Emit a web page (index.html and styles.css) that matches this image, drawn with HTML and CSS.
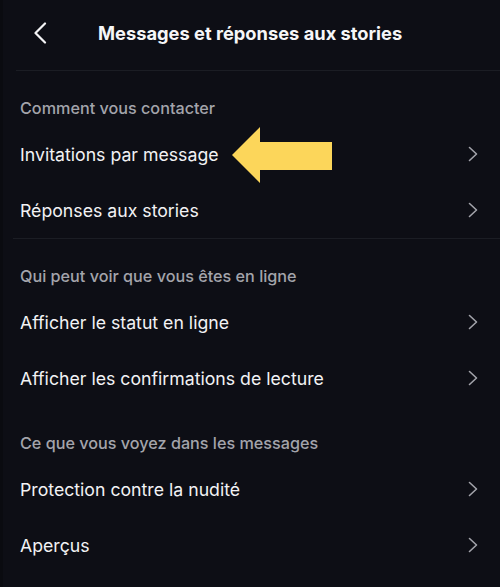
FILE: index.html
```html
<!DOCTYPE html>
<html lang="fr">
<head>
<meta charset="utf-8">
<title>Messages et réponses aux stories</title>
<link rel="stylesheet" href="styles.css">
</head>
<body>
<div class="screen">
  <header class="topbar">
    <svg class="back" width="14" height="22" viewBox="0 0 14 22"><polyline points="12,1.5 2.5,11 12,20.5" fill="none" stroke="#f4f4f6" stroke-width="2.2" stroke-linecap="round" stroke-linejoin="round"/></svg>
    <h1 class="title">Messages et réponses aux stories</h1>
  </header>

  <section class="section bordered">
    <div class="section-title">Comment vous contacter</div>
    <div class="row">
      <span class="label">Invitations par message</span>
      <svg class="arrow" width="100" height="56" viewBox="0 0 100 56"><polygon points="0,28 28,0 28,15 100,15 100,43 28,43 28,56" fill="#fcd65a"/></svg>
      <svg class="chev" width="10" height="16" viewBox="0 0 10 16"><polyline points="1.5,1.5 8.5,8 1.5,14.5" fill="none" stroke="#a2a3aa" stroke-width="1.6" stroke-linecap="round" stroke-linejoin="round"/></svg>
    </div>
    <div class="row">
      <span class="label">Réponses aux stories</span>
      <svg class="chev" width="10" height="16" viewBox="0 0 10 16"><polyline points="1.5,1.5 8.5,8 1.5,14.5" fill="none" stroke="#a2a3aa" stroke-width="1.6" stroke-linecap="round" stroke-linejoin="round"/></svg>
    </div>
  </section>

  <section class="section">
    <div class="section-title">Qui peut voir que vous êtes en ligne</div>
    <div class="row">
      <span class="label">Afficher le statut en ligne</span>
      <svg class="chev" width="10" height="16" viewBox="0 0 10 16"><polyline points="1.5,1.5 8.5,8 1.5,14.5" fill="none" stroke="#a2a3aa" stroke-width="1.6" stroke-linecap="round" stroke-linejoin="round"/></svg>
    </div>
    <div class="row">
      <span class="label">Afficher les confirmations de lecture</span>
      <svg class="chev" width="10" height="16" viewBox="0 0 10 16"><polyline points="1.5,1.5 8.5,8 1.5,14.5" fill="none" stroke="#a2a3aa" stroke-width="1.6" stroke-linecap="round" stroke-linejoin="round"/></svg>
    </div>
  </section>

  <section class="section">
    <div class="section-title">Ce que vous voyez dans les messages</div>
    <div class="row">
      <span class="label">Protection contre la nudité</span>
      <svg class="chev" width="10" height="16" viewBox="0 0 10 16"><polyline points="1.5,1.5 8.5,8 1.5,14.5" fill="none" stroke="#a2a3aa" stroke-width="1.6" stroke-linecap="round" stroke-linejoin="round"/></svg>
    </div>
    <div class="row">
      <span class="label">Aperçus</span>
      <svg class="chev" width="10" height="16" viewBox="0 0 10 16"><polyline points="1.5,1.5 8.5,8 1.5,14.5" fill="none" stroke="#a2a3aa" stroke-width="1.6" stroke-linecap="round" stroke-linejoin="round"/></svg>
    </div>
  </section>
</div>
</body>
</html>
```

FILE: styles.css
```css
* { box-sizing: border-box; }
html, body {
  margin: 0;
  padding: 0;
  background: #0d0e15;
}
body {
  font-family: Inter, "Noto Sans", "Liberation Sans", sans-serif;
  color: #f2f2f4;
  width: 500px;
  height: 587px;
  overflow: hidden;
}
.screen {
  display: flex;
  flex-direction: column;
  border-left: 3px solid #0a0b10;
  height: 587px;
}
.topbar {
  height: 71px;
  display: flex;
  align-items: center;
  padding: 0 0 5px 17px;
  border-bottom: 1px solid #1b1d24;
  margin-left: 13px;
}
.back { flex: none; }
.title {
  margin: 0 0 0 51px;
  font-size: 18.3px;
  font-weight: 700;
  color: #f6f6f8;
  letter-spacing: 0;
}
.section {
  display: flex;
  flex-direction: column;
  padding-top: 27px;
}
.section.bordered {
  border-bottom: 1px solid #1b1d24;
  margin-left: 10px;
}
.section.bordered .section-title,
.section.bordered .row { margin-left: -10px; }
.section-title {
  height: 20px;
  line-height: 20px;
  padding-left: 17px;
  font-size: 16.2px;
  font-weight: 500;
  color: #a3a4ab;
  margin-bottom: 8px;
}
.row {
  position: relative;
  height: 56px;
  display: flex;
  align-items: center;
  justify-content: space-between;
  padding: 0 22px 0 17px;
}
.label {
  font-size: 17.7px;
  font-weight: 400;
  color: #f2f2f4;
}
.chev { flex: none; }
.arrow {
  position: absolute;
  left: 229px;
  top: 1px;
}
```
